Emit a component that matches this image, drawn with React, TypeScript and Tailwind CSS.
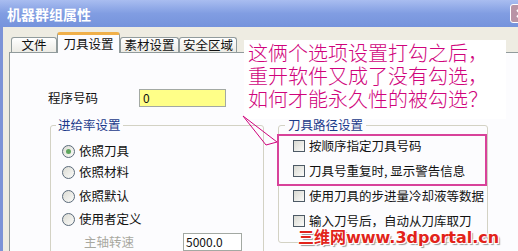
import React from "react";

const tabs = [
  { label: "文件", w: "w-[46px]", active: false },
  { label: "刀具设置", w: "w-[63px]", active: true },
  { label: "素材设置", w: "w-[59px]", active: false },
  { label: "安全区域", w: "w-[58px]", active: false },
];

const radios = [
  { label: "依照刀具", checked: true, mt: "mt-[8px]" },
  { label: "依照材料", checked: false, mt: "mt-[1px]" },
  { label: "依照默认", checked: false, mt: "mt-[4px]" },
  { label: "使用者定义", checked: false, mt: "mt-[3px]" },
];

const checks = [
  "按顺序指定刀具号码",
  "刀具号重复时, 显示警告信息",
  "使用刀具的步进量冷却液等数据",
  "输入刀号后，自动从刀库取刀",
];

function Radio({ checked }: { checked: boolean }) {
  return (
    <span className="w-[13px] h-[13px] rounded-full border border-[#5a6a7a] bg-gradient-to-br from-[#dcdcd4] to-[#fbfbf9] flex items-center justify-center shrink-0">
      {checked && <span className="w-[5px] h-[5px] rounded-full bg-[#5ea65e]" />}
    </span>
  );
}

export default function App() {
  return (
    <div className="relative w-[518px] h-[251px] overflow-hidden bg-[#eeece2] flex flex-col font-['Noto_Sans_CJK_SC',sans-serif] text-[12px] text-[#111]">
      {/* title bar */}
      <div className="h-[27px] shrink-0 flex items-center pl-[7px] bg-gradient-to-b from-[#a9bdf0] via-[#819de2] to-[#7593dc]">
        <span className="text-white font-bold text-[14px] leading-none">机器群组属性</span>
        <span className="ml-auto mr-[-13px] w-[21px] h-[19px] rounded-[3px] border border-white bg-[#b994a6] flex items-center justify-center">
          <svg width="9" height="9" viewBox="0 0 9 9">
            <path d="M1 1L8 8M8 1L1 8" stroke="#fff" strokeWidth="2" />
          </svg>
        </span>
      </div>

      {/* body */}
      <div className="flex-1 flex flex-col border-l-[3px] border-[#7c93d7] pl-[6px] pt-[5px]">
        <div className="h-[20px] flex items-end pl-[2px]">
          {tabs.map((t) =>
            t.active ? (
              <div
                key={t.label}
                className={`${t.w} h-[21px] mb-[-1px] relative z-10 bg-[#fcfcfe] border-x border-[#919b9c] border-t-[3px] border-t-[#f0b04a] rounded-t-[3px] flex items-center justify-center leading-none text-[12.5px]`}
              >
                {t.label}
              </div>
            ) : (
              <div
                key={t.label}
                className={`${t.w} h-[15px] bg-gradient-to-b from-[#ffffff] to-[#ecebe5] border border-b-0 border-[#919b9c] rounded-t-[3px] flex items-center justify-center leading-none text-[12.5px] pt-[1px]`}
              >
                {t.label}
              </div>
            )
          )}
        </div>

        <div className="flex-1 mr-[-20px] border border-[#919b9c] bg-[#fcfcfe] flex flex-col">
          <div className="mt-[36px] pl-[38px] h-[18px] flex items-center">
            <span className="w-[91px] text-[12.5px]">程序号码</span>
            <span className="w-[87px] h-[18px] border border-[#a3a9a3] bg-[#ffff88] pl-[3px] flex items-center leading-none">0</span>
          </div>

          <div className="mt-[10px] pl-[40px] flex gap-[14px] items-start">
            <fieldset className="w-[214px] h-[150px] border border-[#d3d2c4] rounded-[3px]">
              <legend className="ml-[5px] px-[2px] text-[#1b3a8a] text-[12.5px] leading-[16px]">进给率设置</legend>
              {radios.map((r) => (
                <div key={r.label} className={`${r.mt} h-[20px] pl-[11px] flex items-center gap-[4px] text-[12.5px]`}>
                  <Radio checked={r.checked} />
                  <span>{r.label}</span>
                </div>
              ))}
              <div className="mt-[4px] h-[18px] pl-[33px] flex items-center">
                <span className="w-[99px] text-[#a8a8a0] text-[12.5px]">主轴转速</span>
                <span className="w-[59px] h-[18px] border border-[#a3a9a3] bg-white pl-[2px] flex items-center leading-none">5000.0</span>
              </div>
            </fieldset>

            <fieldset className="w-[210px] h-[126px] border border-[#d3d2c4] rounded-[3px]">
              <legend className="ml-[6px] px-[3px] text-[#1b3a8a] text-[12.5px] leading-[16px]">刀具路径设置</legend>
              <div className="mt-[3px] flex flex-col gap-[5px]">
                {checks.map((c) => (
                  <div key={c} className="h-[20px] pl-[14px] flex items-center gap-[4px] text-[12.5px]">
                    <span className="w-[12px] h-[12px] border border-[#4d5a66] bg-gradient-to-br from-[#d9d9d2] to-[#fbfbf9] shrink-0" />
                    <span>{c}</span>
                  </div>
                ))}
              </div>
            </fieldset>
          </div>
        </div>
      </div>

      {/* annotation note */}
      <div className="absolute left-[244px] top-[40px] w-[262px] h-[79px] bg-white pl-[4px] pt-[1px] text-[#d0047c] text-[20px] leading-[23px] font-light">
        <div>这俩个选项设置打勾之后，</div>
        <div>重开软件又成了没有勾选，</div>
        <div>如何才能永久性的被勾选？</div>
      </div>

      {/* highlight box */}
      <div className="absolute left-[277px] top-[134px] w-[210px] h-[52px] border-2 border-[#d8429a]" />

      {/* arrow */}
      <svg className="absolute left-0 top-0 pointer-events-none" width="518" height="251">
        <polyline points="243,116 277,142 266,145 243,116" fill="none" stroke="#d0047c" strokeWidth="1" />
      </svg>

      {/* watermark */}
      <div className="absolute left-[298px] top-[229px] text-[#e2231a] font-bold text-[16px] leading-[18px] font-['DejaVu_Sans','Noto_Sans_CJK_SC',sans-serif] [text-shadow:1px_1px_0_#fff,-1px_-1px_0_#fff,1px_-1px_0_#fff,-1px_1px_0_#fff,2px_2px_1px_#999]">
        三维网www.3dportal.cn
      </div>
    </div>
  );
}
